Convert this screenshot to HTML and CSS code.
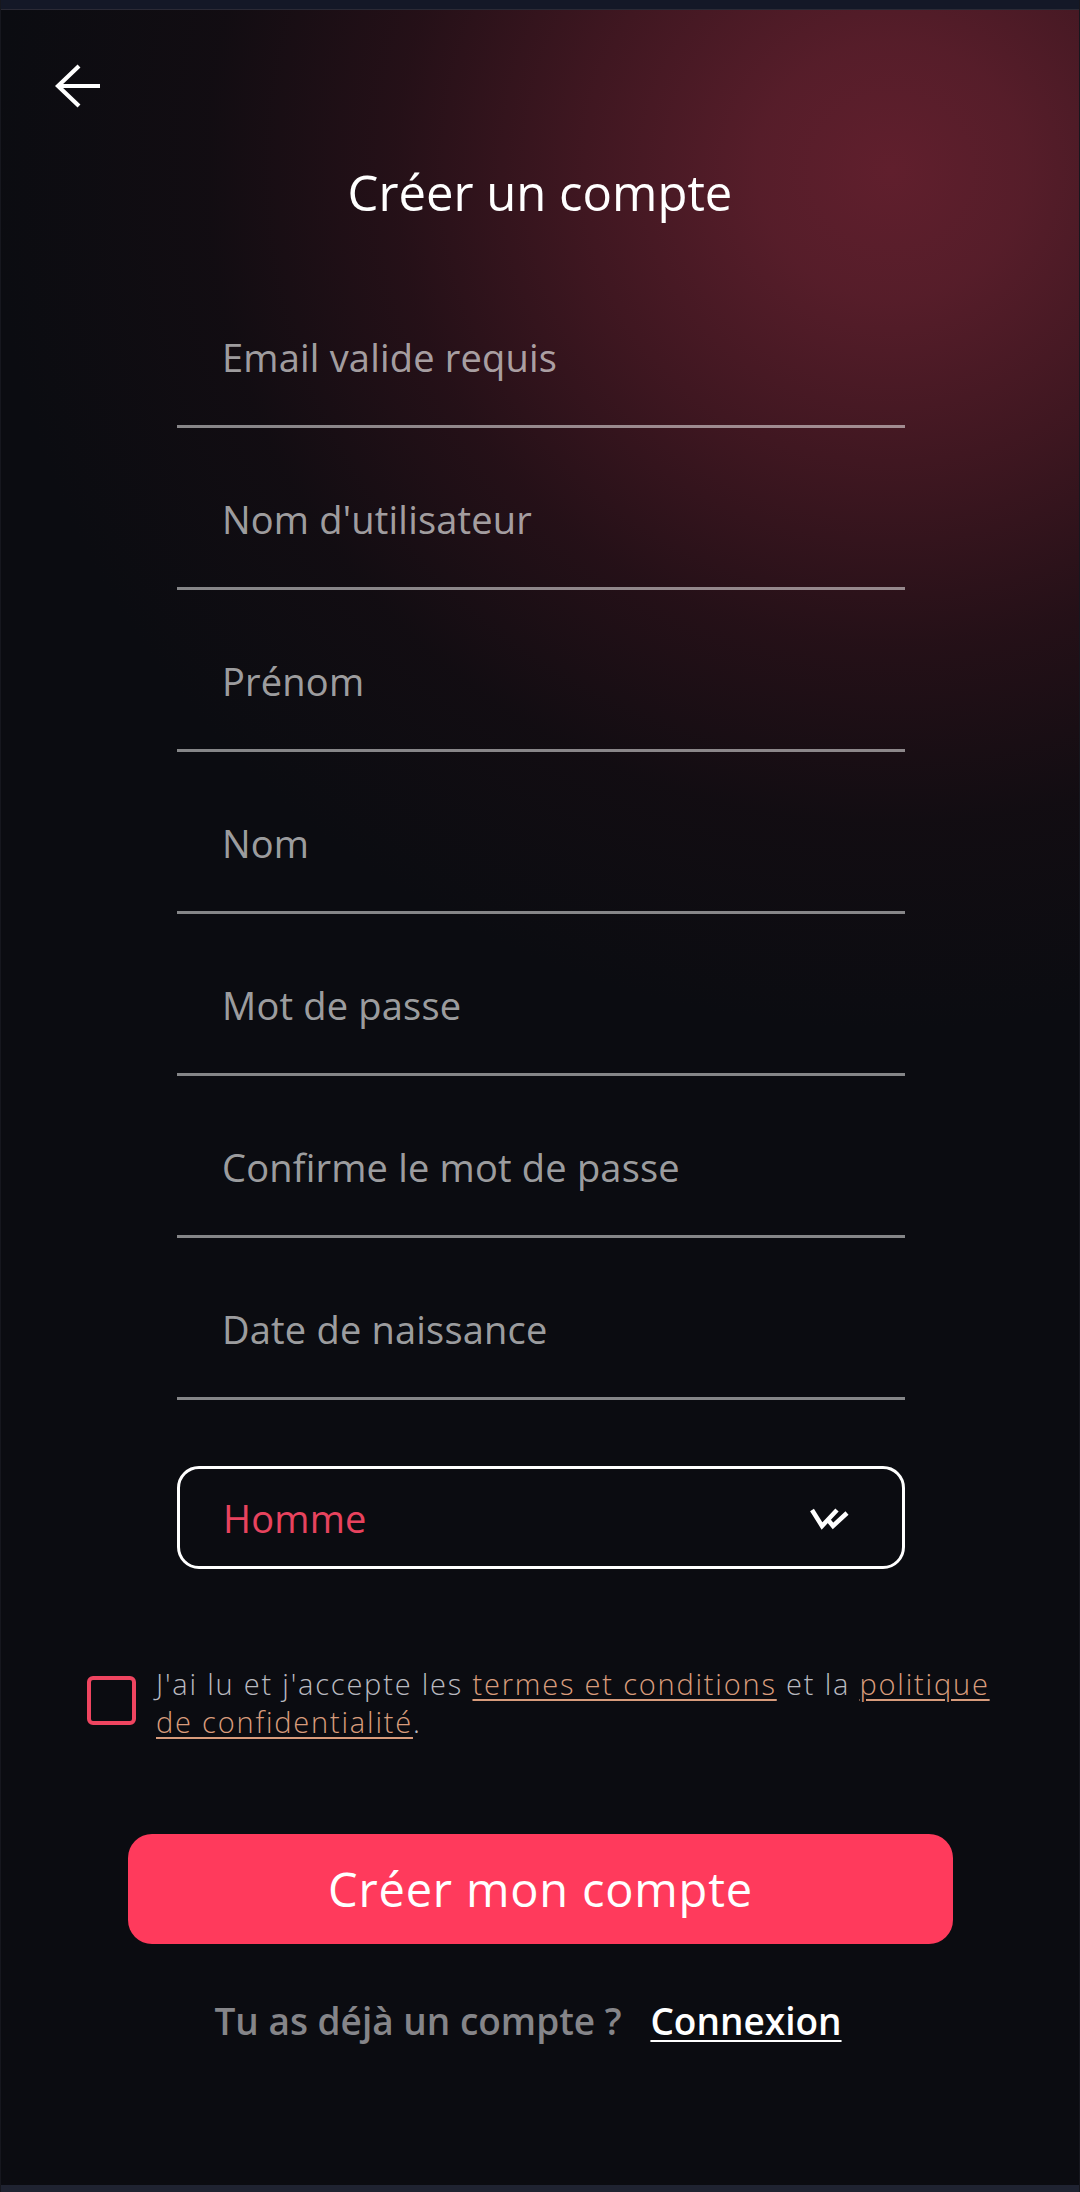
FILE: index.html
```html
<!DOCTYPE html>
<html lang="fr">
<head>
<meta charset="utf-8">
<title>Créer un compte</title>
<link rel="stylesheet" href="styles.css">
</head>
<body>
<div class="screen">
  <div class="statusbar"></div>
  <header class="header">
    <button class="back" aria-label="Retour">
      <svg width="46" height="44" viewBox="0 0 46 44">
        <path d="M24 2 L3 22 L24 42 M3 22 L45 22" fill="none" stroke="#fff" stroke-width="4.2" stroke-linecap="butt" stroke-linejoin="miter"/>
      </svg>
    </button>
    <h1 class="title">Créer un compte</h1>
  </header>

  <form class="form">
    <div class="field">Email valide requis</div>
    <div class="field">Nom d'utilisateur</div>
    <div class="field">Prénom</div>
    <div class="field">Nom</div>
    <div class="field">Mot de passe</div>
    <div class="field">Confirme le mot de passe</div>
    <div class="field">Date de naissance</div>

    <div class="select">
      <span class="select-value">Homme</span>
      <svg class="chev" width="40" height="24" viewBox="0 0 40 24">
        <path d="M2 3 L12 19 L27 3" fill="none" stroke="#fff" stroke-width="4.5"/>
        <path d="M19 14 L23 19 L37 6" fill="none" stroke="#fff" stroke-width="4.5"/>
      </svg>
    </div>
  </form>

  <div class="terms">
    <span class="checkbox"></span>
    <p class="terms-text">J'ai lu et j'accepte les <a class="link">termes et conditions</a> et la <a class="link">politique</a> <a class="link">de confidentialité</a>.</p>
  </div>

  <button class="cta">Créer mon compte</button>

  <p class="login">Tu as déjà un compte ?&nbsp;&nbsp; <a class="login-link">Connexion</a></p>

  <div class="spacer"></div>
  <div class="navbar"></div>
</div>
</body>
</html>
```

FILE: styles.css
```css
* { box-sizing: border-box; }
html, body { margin: 0; padding: 0; background: #0b0c11; }
body { font-family: "Open Sans", "Noto Sans", sans-serif; color: #fff; }

.screen {
  width: 1080px;
  height: 2192px;
  display: flex;
  flex-direction: column;
  background:
    radial-gradient(ellipse 900px 860px at 890px 170px, rgba(96,31,45,1) 0%, rgba(90,30,43,0.95) 15%, rgba(74,25,36,0.82) 35%, rgba(54,19,28,0.6) 55%, rgba(32,14,20,0.32) 76%, rgba(11,12,17,0) 100%),
    #0b0c11;
  border-left: 1px solid #16171e;
  border-right: 1px solid #16171e;
  overflow: hidden;
}

.statusbar {
  height: 10px;
  background: #141827;
  border-bottom: 1px solid #2b2a35;
  flex: none;
}

.header {
  display: flex;
  flex-direction: column;
  height: 256px;
  flex: none;
}

.back {
  margin: 54px 0 0 54px;
  width: 46px;
  height: 44px;
  padding: 0;
  border: 0;
  background: none;
  display: block;
}
.back svg { display: block; }

.title {
  margin: 54px 0 0 0;
  font-size: 49px;
  line-height: 60px;
  font-weight: 400;
  text-align: center;
}

.form {
  margin: 0 0 0 176px;
  width: 728px;
  display: flex;
  flex-direction: column;
}

.field {
  height: 162px;
  border-bottom: 3px solid rgba(255,255,255,0.5);
  padding: 68px 0 0 45px;
  font-size: 38px;
  letter-spacing: 0.2px;
  line-height: 46px;
  color: rgba(255,255,255,0.62);
}

.select {
  margin-top: 66px;
  height: 103px;
  border: 3px solid #fff;
  border-radius: 22px;
  display: flex;
  align-items: center;
  justify-content: space-between;
  padding: 0 52px 0 43px;
}
.select-value {
  font-size: 38px;
  letter-spacing: 0.2px;
  line-height: 46px;
  color: #e8435e;
}
.chev { display: block; margin-top: 2px; }

.terms {
  margin: 96px 0 0 86px;
  width: 912px;
  display: flex;
  gap: 20px;
}
.checkbox {
  flex: none;
  width: 49px;
  height: 49px;
  margin-top: 11px;
  border: 4.5px solid #ef4560;
  border-radius: 6px;
}
.terms-text {
  margin: 0;
  font-size: 29px;
  letter-spacing: 1.8px;
  line-height: 38px;
  font-weight: 300;
  color: #b9bac0;
}
.link {
  color: #d99c7c;
  text-decoration: underline;
  text-decoration-thickness: 2px;
  text-underline-offset: 4px;
}

.cta {
  margin: 93px 0 0 127px;
  width: 825px;
  height: 110px;
  border: 0;
  border-radius: 24px;
  background: #ff3a5c;
  color: #fff;
  font-family: inherit;
  font-size: 47px;
  letter-spacing: 0.8px;
  font-weight: 500;
  flex: none;
}

.login {
  margin: 54px 0 0 0;
  text-align: center;
  font-size: 37px;
  line-height: 46px;
  font-weight: 600;
  color: #858589;
  padding-right: 24px;
}
.login-link {
  color: #fff;
  text-decoration: underline;
  text-decoration-thickness: 2px;
  text-underline-offset: 5px;
}

.spacer { flex: 1; }
.navbar {
  height: 7px;
  background: #1f2331;
  flex: none;
}
```
